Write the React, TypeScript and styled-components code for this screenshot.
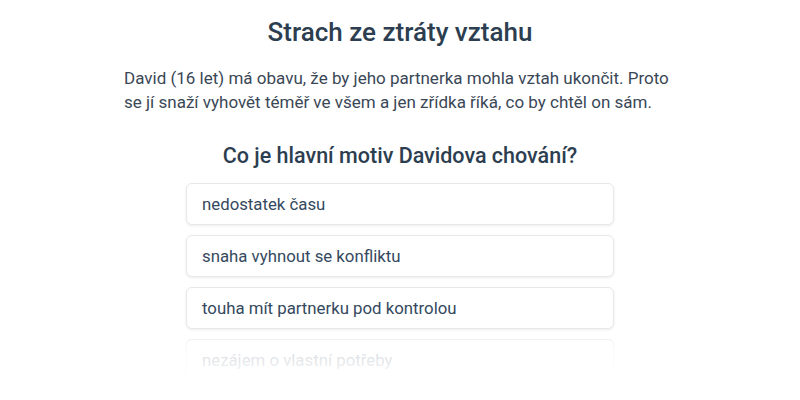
import React from "react";
import styled, { createGlobalStyle } from "styled-components";

const Global = createGlobalStyle`
  html, body { margin: 0; padding: 0; background: #ffffff; }
  body { font-family: Roboto, "Liberation Sans", Arial, sans-serif; -webkit-font-smoothing: antialiased; }
  * { box-sizing: border-box; }
`;

const Page = styled.div`
  position: relative;
  width: 800px;
  height: 400px;
  overflow: hidden;
  display: flex;
  flex-direction: column;
  align-items: center;
  padding-top: 15px;
  color: #2c3e50;
`;

const Title = styled.h1`
  margin: 0;
  font-size: 26px;
  line-height: 34px;
  font-weight: 500;
  color: #2c3e50;
`;

const Story = styled.p`
  margin: 17px 0 0;
  width: 552px;
  font-size: 17px;
  line-height: 24px;
  color: #3a4756;
`;

const Question = styled.h2`
  margin: 28px 0 0;
  font-size: 21.5px;
  line-height: 28px;
  font-weight: 500;
  color: #2c3e50;
`;

const Options = styled.div`
  margin-top: 13px;
  width: 428px;
  display: flex;
  flex-direction: column;
  gap: 10px;
`;

const Option = styled.button`
  display: flex;
  align-items: center;
  height: 42px;
  padding: 0 15px;
  border: 1px solid #e6e8eb;
  border-radius: 6px;
  background: #ffffff;
  box-shadow: 0 1px 3px rgba(0, 0, 0, 0.08);
  font-family: inherit;
  font-size: 16.8px;
  color: #34495e;
  text-align: left;
  cursor: pointer;
`;

const Fade = styled.div`
  position: absolute;
  left: 0;
  right: 0;
  bottom: 0;
  height: 72px;
  background: linear-gradient(to bottom, rgba(255,255,255,0) 0%, rgba(255,255,255,0.8) 30%, #ffffff 75%);
  pointer-events: none;
`;

const options = [
  "nedostatek času",
  "snaha vyhnout se konfliktu",
  "touha mít partnerku pod kontrolou",
  "nezájem o vlastní potřeby",
];

export default function App() {
  return (
    <>
      <Global />
      <Page>
        <Title>Strach ze ztráty vztahu</Title>
        <Story>
          David (16 let) má obavu, že by jeho partnerka mohla vztah ukončit. Proto se jí snaží vyhovět téměř ve všem a jen zřídka říká, co by chtěl on sám.
        </Story>
        <Question>Co je hlavní motiv Davidova chování?</Question>
        <Options>
          {options.map((o) => (
            <Option key={o}>{o}</Option>
          ))}
        </Options>
        <Fade />
      </Page>
    </>
  );
}
